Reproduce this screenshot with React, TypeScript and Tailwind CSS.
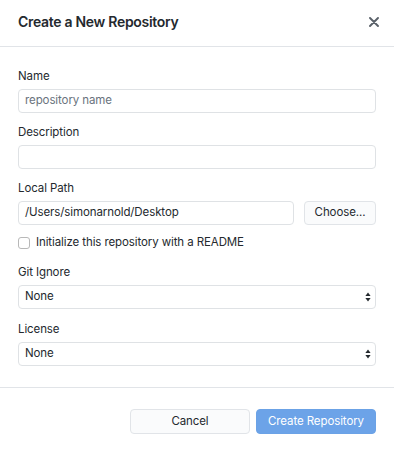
import React from "react";

const font = { fontFamily: "Inter, 'Noto Sans', sans-serif" };

function Label({ children }: { children: React.ReactNode }) {
  return <div className="h-4 text-[11.5px] tracking-[-0.1px] leading-4 text-[#24292e] mb-[5px]">{children}</div>;
}

function Select({ value }: { value: string }) {
  return (
    <div className="h-6 rounded-[4px] border border-[#dfe2e5] bg-white flex items-center justify-between pl-[6px] pr-[4px] text-[11.5px] tracking-[-0.1px] text-[#24292e]">
      <span>{value}</span>
      <svg width="6" height="10" viewBox="0 0 6 10">
        <path d="M3 0.5 L5.6 4 L0.4 4 Z" fill="#24292e" />
        <path d="M3 9.5 L5.6 6 L0.4 6 Z" fill="#24292e" />
      </svg>
    </div>
  );
}

export default function App() {
  return (
    <div className="w-[394px] h-[451px] bg-white flex flex-col" style={font}>
      <div className="h-[47px] border-b border-[#e1e4e8] flex items-center justify-between pl-[18px] pr-[15px] pb-[3px]">
        <div className="text-[14px] font-semibold text-[#24292e] tracking-[-0.3px]">Create a New Repository</div>
        <svg width="10" height="10" viewBox="0 0 10 10">
          <path d="M1 1 L9 9 M9 1 L1 9" stroke="#5a6169" strokeWidth="1.9" strokeLinecap="round" />
        </svg>
      </div>
      <div className="px-[18px] pt-[21px] pb-[21px] border-b border-[#e1e4e8]">
        <Label>Name</Label>
        <div className="h-6 rounded-[4px] border border-[#dfe2e5] flex items-center px-[6px] text-[11.5px] tracking-[-0.1px] text-[#6a737d]">
          repository name
        </div>
        <div className="mt-[11px]">
          <Label>Description</Label>
          <div className="h-6 rounded-[4px] border border-[#dfe2e5]" />
        </div>
        <div className="mt-[11px]">
          <Label>Local Path</Label>
          <div className="flex gap-[10px]">
            <div className="flex-1 h-6 rounded-[4px] border border-[#dfe2e5] flex items-center px-[6px] text-[11.5px] tracking-[-0.1px] text-[#24292e]">
              /Users/simonarnold/Desktop
            </div>
            <div className="w-[72px] h-6 rounded-[4px] border border-[#e1e4e8] bg-[#fafbfc] flex items-center justify-center text-[11.5px] tracking-[-0.1px] text-[#24292e]">
              Choose...
            </div>
          </div>
        </div>
        <div className="mt-[10px] h-4 flex items-center gap-[6px] text-[11.5px] tracking-[-0.1px] text-[#24292e]">
          <div className="w-[12px] h-[12px] rounded-[3px] border border-[#b8b8b8] bg-white" />
          <span>Initialize this repository with a README</span>
        </div>
        <div className="mt-[13px]">
          <Label>Git Ignore</Label>
          <Select value="None" />
        </div>
        <div className="mt-[12px]">
          <Label>License</Label>
          <Select value="None" />
        </div>
      </div>
      <div className="flex justify-end gap-[6px] px-[18px] pt-[21px]">
        <div className="w-[120px] h-[25px] rounded-[4px] border border-[#e1e4e8] bg-[#fafbfc] flex items-center justify-center text-[11.5px] tracking-[-0.1px] text-[#24292e]">
          Cancel
        </div>
        <div className="w-[120px] h-[25px] rounded-[4px] border border-[#6ba2e6] bg-[#6ca3e8] flex items-center justify-center text-[11.5px] tracking-[-0.1px] text-white">
          Create Repository
        </div>
      </div>
    </div>
  );
}
